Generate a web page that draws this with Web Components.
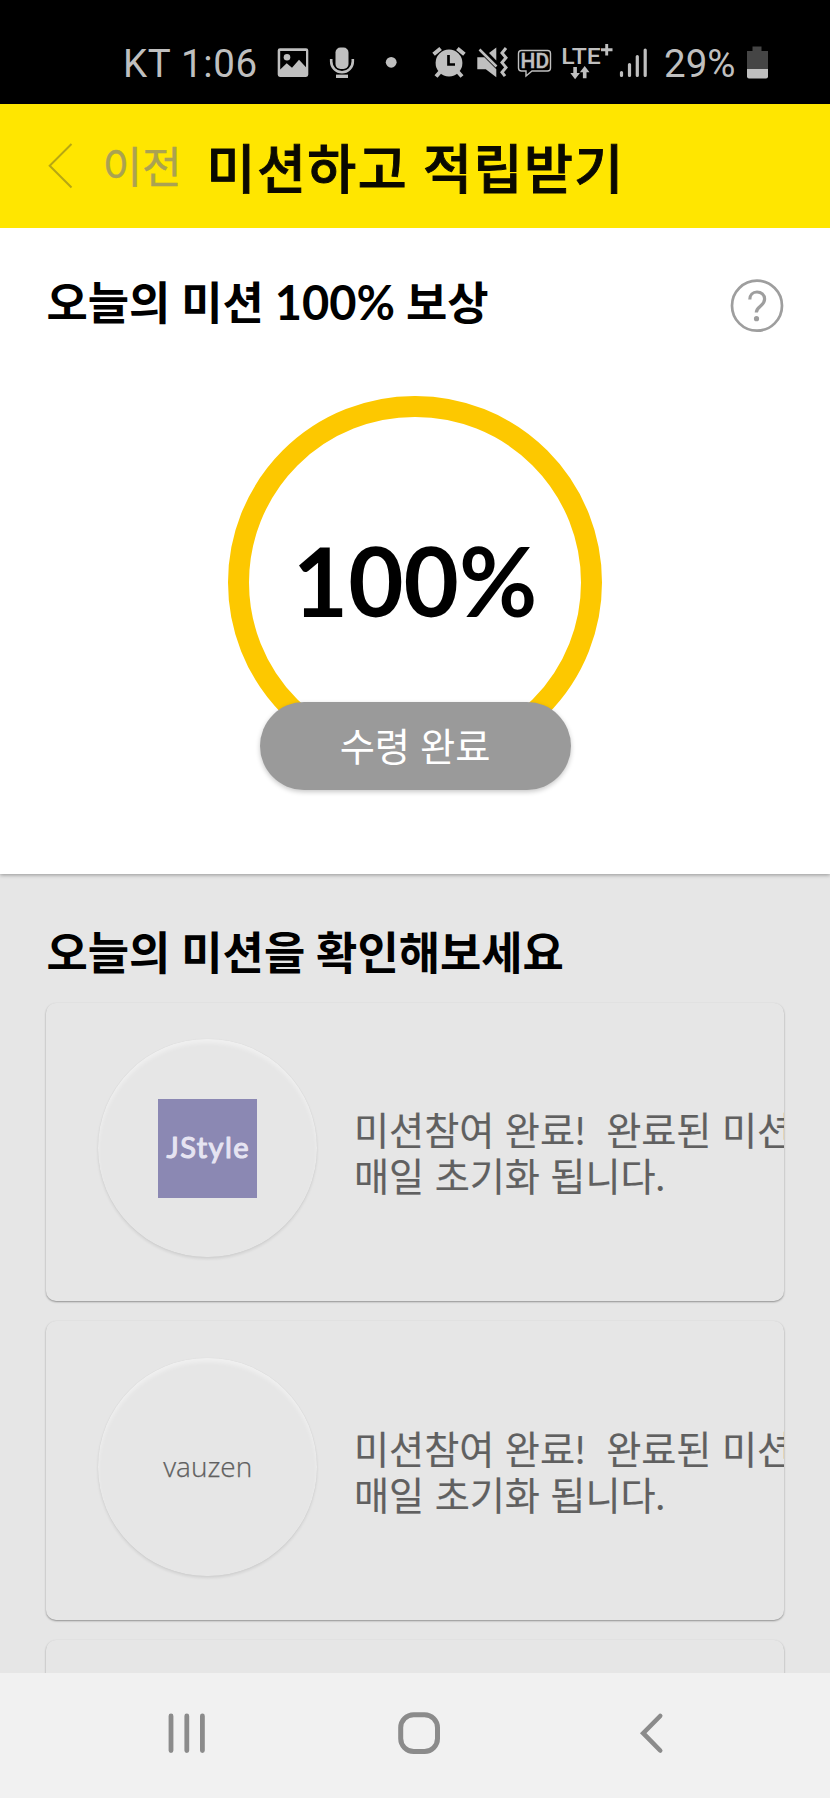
<!DOCTYPE html>
<html lang="ko">
<head>
<meta charset="utf-8">
<title>미션하고 적립받기</title>
<style>
html,body{margin:0;padding:0}
body{width:830px;height:1798px;overflow:hidden;background:#e6e6e6;font-family:Lato,"Noto Sans CJK KR",sans-serif}
</style>
</head>
<body>
<mission-app></mission-app>
<script>
const define = (name, markup) => {
  const t = document.createElement('template');
  t.innerHTML = markup;
  customElements.define(name, class extends HTMLElement {
    constructor() {
      super();
      this.attachShadow({mode: 'open'}).appendChild(t.content.cloneNode(true));
    }
  });
};

define('status-bar', `
<style>
:host{display:flex;height:104px;padding-left:123px;box-sizing:border-box;background:#000;color:#bfbfbf;font:38.5px/104px Roboto,sans-serif}
svg{display:block;flex:none;height:104px;fill:#bfbfbf}
span{display:block;flex:none;height:128px;line-height:128px;white-space:pre}
.a{width:153px;letter-spacing:.65px}.b{width:85px;padding-left:4px;box-sizing:border-box}
</style>
<span class="a">KT 1:06</span>
<svg width="52" viewBox="276 0 52 104"><path fill-rule="evenodd" d="M280 48.3h26a2.3 2.3 0 0 1 2.3 2.3v24a2.3 2.3 0 0 1-2.3 2.3h-26a2.3 2.3 0 0 1-2.3-2.3v-24a2.3 2.3 0 0 1 2.3-2.3zM280.2 51v18.5l6.5-6.2 5.3 4.4 7-8 7 7.5V51z"/><circle cx="287" cy="57.3" r="3.3"/></svg>
<svg width="52" viewBox="328 0 52 104"><rect x="335.5" y="47.5" width="13" height="21.5" rx="5"/><path d="M331.2 59v2.500a10.800 10.800 0 0 0 21.600 0V59" fill="none" stroke="#bfbfbf" stroke-width="2.600"/><path d="M336 74.600h12v3.400h-12z"/></svg>
<svg width="50" viewBox="380 0 50 104"><circle cx="391.200" cy="62.300" r="5.400"/></svg>
<svg width="44" viewBox="430 0 44 104"><circle cx="449" cy="63" r="13.400"/><g stroke="#bfbfbf" stroke-width="4"><path d="M433.600 54.300l7-5.800M464.400 54.300l-7-5.800"/><path d="M440 72l-4 4.500M458 72l4 4.500"/></g><path d="M448.500 55v9.500h6.500" fill="none" stroke="#000" stroke-width="2.700"/></svg>
<svg width="42" viewBox="474 0 42 104"><path d="M477.300 57.300h7l12 12v8l-10.500-8h-8.500zM489 53l7.300-5.500v13z"/><path d="M479.500 49.500l17 17" stroke="#bfbfbf" stroke-width="2.500"/><path d="M506 48l-4 5 4 4.800-4 4.800 4 4.800-4 4.800 3 4" fill="none" stroke="#bfbfbf" stroke-width="3"/></svg>
<svg width="44" viewBox="516 0 44 104"><path d="M521.500 50.500h26a3 3 0 0 1 3 3v14.500a3 3 0 0 1-3 3H532l-6 5v-5h-4.500a3 3 0 0 1-3-3V53.500a3 3 0 0 1 3-3z" fill="none" stroke="#bfbfbf" stroke-width="1.400"/><text x="520.600" y="68.300" font-family="Roboto,sans-serif" font-size="19.500" font-weight="500" textLength="28.500" lengthAdjust="spacingAndGlyphs" stroke="#bfbfbf" stroke-width=".4">HD</text></svg>
<svg width="58" viewBox="560 0 58 104"><text x="561.300" y="63.800" font-family="Roboto,sans-serif" font-size="22.800" font-weight="500" textLength="39.500" lengthAdjust="spacingAndGlyphs">LTE</text><path d="M601 49.700h11.500M606.700 44v11.500" stroke="#bfbfbf" stroke-width="2.900"/><path d="M573.300 67h3.600v6h3l-4.800 6.300-4.800-6.300h3zM582.900 78.300h3.600v-6h3l-4.800-6.300-4.800 6.300h3z"/></svg>
<svg width="42" viewBox="618 0 42 104"><g stroke="#bfbfbf" stroke-width="3.200" stroke-linecap="round"><path d="M621.500 72.500v3M629.500 64.500v11M637.300 56.500v19M645.200 50v25.500"/></g></svg>
<span class="b">29%</span>
<svg width="27" viewBox="745 0 27 104"><path fill="#454545" d="M752.500 46.500h9v4.500h6.500v18h-21V51h5.500z"/><path d="M747 69h21v7.500a2 2 0 0 1-2 2h-17a2 2 0 0 1-2-2z"/></svg>
`);

define('page-header', `
<style>
:host{display:flex;align-items:center;height:123.700px;box-sizing:border-box;padding-left:48px;background:#ffe600}
svg{display:block}
.back{font-size:43px;line-height:60px;color:#aaa252;margin-left:28.500px;width:104px;white-space:nowrap;padding-top:2px;-webkit-text-stroke:.4px #aaa252}
h1{margin:0;padding-top:4px;font-size:53.200px;line-height:70px;font-weight:500;color:#0a0900;-webkit-text-stroke:.9px #0a0900;letter-spacing:1.480px;white-space:nowrap}
</style>
<svg width="26" height="50" viewBox="0 0 26 50" fill="none" stroke="#b7a713" stroke-width="2"><path d="M23.500 3L1.700 24.700 23.500 46.500"/></svg>
<span class="back"><slot name="back"></slot></span>
<h1><slot></slot></h1>
`);

define('section-title', `
<style>
:host{display:flex;justify-content:space-between;height:60px;padding:0 46px 0 46.500px;color:#000;font-size:44.900px;font-weight:700;line-height:60px;white-space:nowrap}
</style>
<slot></slot><slot name="action"></slot>
`);

define('help-button', `
<style>:host{display:block;width:54px;height:54px}svg{display:block}</style>
<svg width="54" height="54" viewBox="730 279 54 54" fill="none" stroke="#9e9e9e"><circle cx="757" cy="305.700" r="25" stroke-width="2.700"/><path d="M749.800 299.500c0-4.500 3-7.500 7.200-7.500s7.600 2.800 7.600 7c0 3-1.500 4.800-3.700 6.700-2.700 2.300-4.600 3.500-4.600 6.700" stroke-width="3.200"/><circle cx="756.500" cy="318.700" r="2.600" fill="#9e9e9e" stroke="none"/></svg>
`);

define('reward-ring', `
<style>
:host{display:grid;grid-template-rows:306px 89px;justify-items:center;height:395px}
.ring{grid-row:1;width:373.500px;height:373.500px;box-sizing:border-box;border:21px solid #fdc800;border-radius:50%;display:flex;align-items:center;justify-content:center;font-size:95.500px;line-height:100px;font-weight:700;color:#000;padding-bottom:4px}
.pill{grid-row:2;width:311px;height:88.500px;border-radius:45px;background:#9a9a9a;color:#fff;font-size:38.300px;line-height:89px;text-align:center;box-shadow:0 2px 5px rgba(0,0,0,.22);z-index:1}
</style>
<div class="ring"><slot></slot></div>
<div class="pill"><slot name="state"></slot></div>
`);

define('reward-panel', `
<style>
:host{display:block;height:646px;box-sizing:border-box;padding-top:44.500px;background:#fff;box-shadow:0 1px 4px rgba(0,0,0,.36)}
</style>
<slot></slot>
`);

define('mission-card', `
<style>
:host{display:flex;align-items:center;box-sizing:border-box;width:738px;height:298.500px;padding-left:52px;border-radius:10px;background:#e6e6e6;overflow:hidden;box-shadow:0 1px 2px rgba(0,0,0,.38)}
.logo{flex:none;width:218.500px;height:218.500px;border-radius:50%;display:flex;align-items:center;justify-content:center;margin-bottom:7.500px;box-shadow:0 2px 3px rgba(0,0,0,.09),0 0 1px rgba(0,0,0,.1),inset 0 4px 4px rgba(255,255,255,.4)}
.text{flex:none;margin-left:37.500px;padding-top:3px;font-size:38.150px;line-height:46.700px;color:#606060;-webkit-text-stroke:.15px #606060;word-spacing:.7px;white-space:pre}
</style>
<div class="logo"><slot name="logo"></slot></div>
<div class="text"><slot></slot></div>
`);

define('jstyle-logo', `
<style>:host{display:block;width:99px;height:99px;background:#8b88b3}svg{display:block}</style>
<svg width="99" height="99" viewBox="0 0 99 99"><text x="8.500" y="58.500" textLength="82" lengthAdjust="spacing" font-family="Lato,sans-serif" font-size="29" font-weight="400" fill="#e6e4f2" stroke="#e6e4f2" stroke-width="1.100" stroke-linejoin="round">JStyle</text></svg>
`);

define('vauzen-logo', `
<style>:host{display:block;font:300 28px/40px "Open Sans",sans-serif;color:#606060;-webkit-text-stroke:.25px #606060;padding:0 0 2px 1px}</style>vauzen
`);

define('nav-bar', `
<style>
:host{display:flex;height:125px;background:#f1f1f1;padding-left:160px;box-sizing:border-box}
svg{display:block;flex:none;height:125px;fill:none;stroke:#8b8b8b;stroke-width:5}
</style>
<svg width="100" viewBox="160 1673 100 125"><path stroke-width="4.800" stroke-linecap="round" d="M171 1716v34.500M186.800 1716v34.500M202.400 1716v34.500"/></svg>
<svg width="300" viewBox="260 1673 300 125"><rect x="400.700" y="1714.700" width="36.800" height="36.800" rx="13"/></svg>
<svg width="200" viewBox="560 1673 200 125"><path stroke-linecap="round" stroke-width="4.600" d="M660.200 1716L643.200 1733.200l17 17.300"/></svg>
`);

define('mission-app', `
<style>
:host{display:flex;flex-direction:column;width:830px;height:1798px;overflow:hidden;background:#e6e6e6}
main{flex:none;overflow:hidden;height:1445.300px}
status-bar,page-header,nav-bar{flex:none}
.ring{margin-top:63.500px}
.num{font-size:47px}
.list-title{margin-top:49px}
.cards{display:flex;flex-direction:column;gap:20.300px;padding:20px 46px 0}
mission-card{flex:none}
help-button{margin-top:7px}
</style>
<status-bar></status-bar>
<page-header><span slot="back">이전</span>미션하고 적립받기</page-header>
<main>
<reward-panel>
<section-title><span>오늘의 미션 <span class="num">100%</span> 보상</span><help-button></help-button></section-title>
<reward-ring class="ring">100%<span slot="state">수령 완료</span></reward-ring>
</reward-panel>
<section-title class="list-title"><span>오늘의 미션을 확인해보세요</span></section-title>
<div class="cards">
<mission-card><jstyle-logo slot="logo"></jstyle-logo>미션참여 완료!  완료된 미션<br>매일 초기화 됩니다.</mission-card>
<mission-card><vauzen-logo slot="logo"></vauzen-logo>미션참여 완료!  완료된 미션<br>매일 초기화 됩니다.</mission-card>
<mission-card></mission-card>
</div>
</main>
<nav-bar></nav-bar>
`);
</script>
</body>
</html>
